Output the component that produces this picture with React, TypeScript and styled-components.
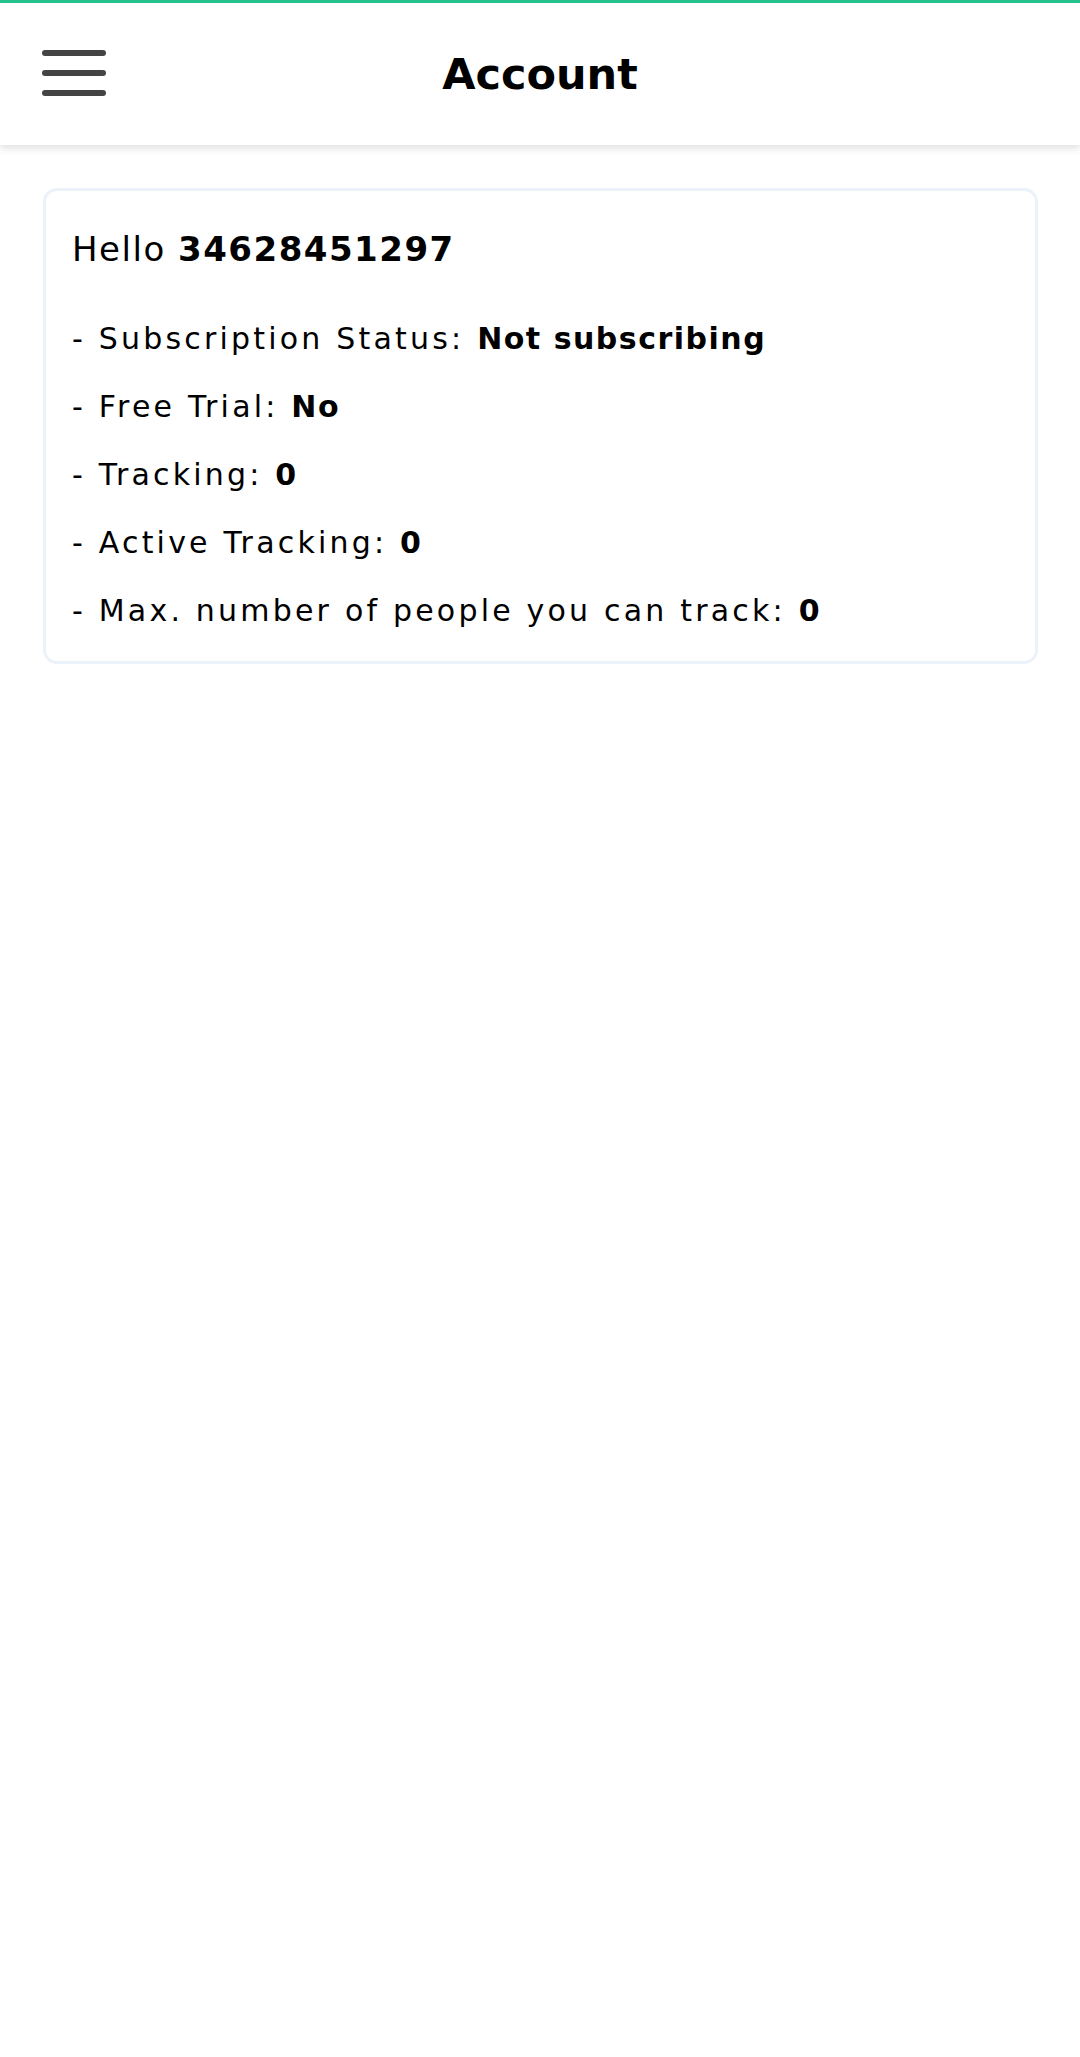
import React from "react";
import styled, { createGlobalStyle } from "styled-components";

const GlobalStyle = createGlobalStyle`
  html, body {
    margin: 0;
    padding: 0;
    background: #ffffff;
  }
  body {
    font-family: "DejaVu Sans", "Open Sans", sans-serif;
    color: #000;
  }
`;

const TopBar = styled.header`
  height: 145px;
  box-sizing: border-box;
  border-top: 3px solid #26c28b;
  background: #fff;
  box-shadow: 0 3px 8px rgba(0, 0, 0, 0.13);
  display: flex;
  align-items: center;
  justify-content: center;
  position: relative;
`;

const MenuButton = styled.button`
  position: absolute;
  left: 42px;
  top: 47px;
  width: 64px;
  height: 46px;
  padding: 0;
  border: 0;
  background: none;
  display: flex;
  flex-direction: column;
  justify-content: space-between;
`;

const Bar = styled.span`
  display: block;
  height: 6px;
  border-radius: 3px;
  background: #444444;
`;

const Title = styled.h1`
  margin: 0;
  font-size: 43px;
  font-weight: 700;
`;

const Content = styled.main`
  padding: 43px 42px 0 43px;
`;

const Card = styled.section`
  border: 3px solid #ebf2f9;
  border-radius: 14px;
  padding: 36px 26px 16px;
`;

const Greeting = styled.div`
  font-size: 34px;
  line-height: 44px;
  margin-bottom: 34px;
  letter-spacing: 1.5px;
`;

const InfoRow = styled.div`
  font-size: 30px;
  line-height: 68px;
  letter-spacing: 3.2px;
`;

const Strong = styled.b<{ $spacing?: number }>`
  font-weight: 700;
  letter-spacing: ${(p) => (p.$spacing ?? 1.5)}px;
`;

const rows: [string, string][] = [
  ["Subscription Status", "Not subscribing"],
  ["Free Trial", "No"],
  ["Tracking", "0"],
  ["Active Tracking", "0"],
  ["Max. number of people you can track", "0"],
];

export default function App() {
  return (
    <>
      <GlobalStyle />
      <TopBar>
        <MenuButton aria-label="menu">
          <Bar />
          <Bar />
          <Bar />
        </MenuButton>
        <Title>Account</Title>
      </TopBar>
      <Content>
        <Card>
          <Greeting>
            Hello <Strong>34628451297</Strong>
          </Greeting>
          {rows.map(([label, value]) => (
            <InfoRow key={label}>
              - {label}: <Strong>{value}</Strong>
            </InfoRow>
          ))}
        </Card>
      </Content>
    </>
  );
}
